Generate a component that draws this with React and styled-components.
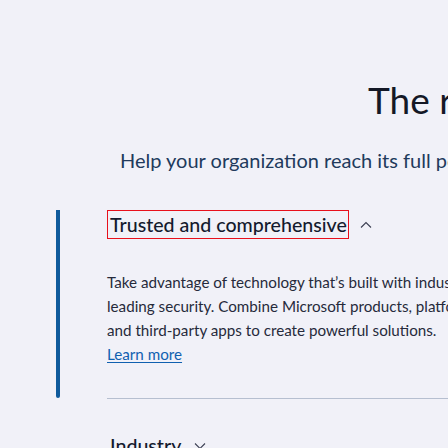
import React from 'react'
import styled, { createGlobalStyle } from 'styled-components'

const Global = createGlobalStyle`
  html, body {
    margin: 0;
    background: #f1f1f8;
    font-family: Lato, "Noto Sans", sans-serif;
    overflow: hidden;
  }
`

const Page = styled.div`
  width: 448px;
  height: 448px;
  overflow: hidden;
  background: #f1f1f8;
`

const Hero = styled.header`
  padding-top: 76px;
  white-space: nowrap;
`

const Title = styled.h1`
  margin: 0;
  padding-left: 368px;
  font-size: 37px;
  line-height: 48px;
  font-weight: 400;
  color: #141826;
`

const Subtitle = styled.p`
  margin: 24px 0 0;
  padding-left: 120px;
  font-size: 20px;
  line-height: 24px;
  color: #213a5c;
`

const Accordion = styled.section`
  display: flex;
  margin-top: 38px;
  padding-left: 56px;
`

const Bar = styled.div`
  width: 4px;
  height: 188px;
  border-radius: 0 0 2px 2px;
  background: #0f5a9c;
  flex-shrink: 0;
`

const Items = styled.div`
  flex: 1;
  margin-left: 47px;
  min-width: 0;
`

const ItemHead = styled.div`
  display: flex;
  align-items: center;
  gap: 11px;
  height: 29px;
`

const HeadLabel = styled.span`
  box-sizing: border-box;
  height: 29px;
  display: flex;
  align-items: center;
  padding: 0 1px 0 2px;
  border: ${p => (p.$focused ? '1.5px solid #e8101c' : '1.5px solid transparent')};
  font-size: 19.6px;
  font-weight: 500;
  color: #141a2e;
  white-space: nowrap;
`

const Chevron = styled.svg`
  width: 12px;
  height: 8px;
  flex-shrink: 0;
`

const Panel = styled.div`
  padding-top: 31px;
`

const Body = styled.p`
  margin: 0;
  width: 378px;
  font-size: 15.2px;
  line-height: 24px;
  color: #262a3b;
`

const Link = styled.a`
  display: inline-block;
  font-size: 15.2px;
  line-height: 24px;
  color: #1060b0;
  text-decoration: underline;
  text-underline-offset: 2px;
`

const Divider = styled.hr`
  margin: 32px 0 0;
  border: none;
  height: 1px;
  background: #b6bfd0;
`

const Next = styled(ItemHead)`
  margin-top: 32px;
`

const ChevronIcon = ({ up }) => (
  <Chevron viewBox="0 0 12 8">
    <path
      d={up ? 'M1 6.5 L6 1.5 L11 6.5' : 'M1 1.5 L6 6.5 L11 1.5'}
      fill="none"
      stroke="#3b3f52"
      strokeWidth="1.1"
    />
  </Chevron>
)

const App = () => {
  return (
    <Page>
      <Global />
      <Hero>
        <Title>The right tools for every team</Title>
        <Subtitle>Help your organization reach its full potential</Subtitle>
      </Hero>
      <Accordion>
        <Bar />
        <Items>
          <ItemHead>
            <HeadLabel $focused>Trusted and comprehensive</HeadLabel>
            <ChevronIcon up />
          </ItemHead>
          <Panel>
            <Body>
              Take advantage of technology that’s built with industry-leading security.
              Combine Microsoft products, platforms, and third-party apps to create
              powerful solutions.
            </Body>
            <Link href="#">Learn more</Link>
          </Panel>
          <Divider />
          <Next>
            <HeadLabel>Industry</HeadLabel>
            <ChevronIcon />
          </Next>
        </Items>
      </Accordion>
    </Page>
  )
}

export default App
